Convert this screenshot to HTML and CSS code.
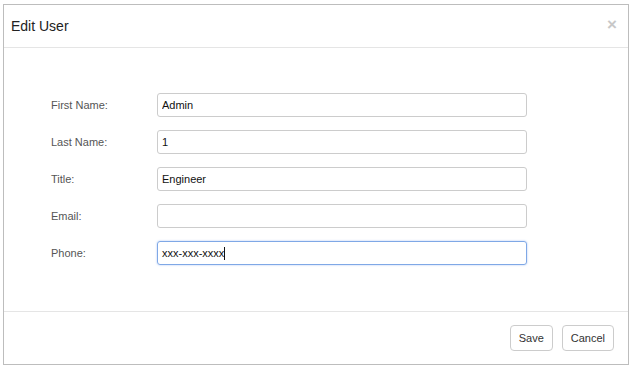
FILE: index.html
```html
<!DOCTYPE html>
<html lang="en">
<head>
    <meta charset="UTF-8">
    <title>Edit User</title>
    <link rel="stylesheet" href="styles.css">
</head>
<body>

<div class="modal">
    <div class="modal-header">
        <h4>Edit User</h4>
        <span class="close">&times;</span>
    </div>
    <div class="modal-body">
        <div class="form-row">
            <label>First Name:</label>
            <input type="text" value="Admin">
        </div>
        <div class="form-row">
            <label>Last Name:</label>
            <input type="text" value="1">
        </div>
        <div class="form-row">
            <label>Title:</label>
            <input type="text" value="Engineer">
        </div>
        <div class="form-row">
            <label>Email:</label>
            <input type="text" value="">
        </div>
        <div class="form-row">
            <label>Phone:</label>
            <div class="field focus">xxx-xxx-xxxx<span class="caret"></span></div>
        </div>
    </div>
    <div class="modal-footer">
        <button>Save</button>
        <button>Cancel</button>
    </div>
</div>

</body>
</html>
```

FILE: styles.css
```css
body {
    margin: 0;
    font-family: "Liberation Sans", Arial, sans-serif;
    font-size: 11px;
    color: #333;
    background: #fff;
}
.modal {
    margin: 4px 4px 0 3px;
    height: 359px;
    border: 1px solid #bdbdbd;
    display: flex;
    flex-direction: column;
}
.modal-header {
    height: 42px;
    border-bottom: 1px solid #e5e5e5;
    display: flex;
    align-items: center;
    justify-content: space-between;
    padding: 0 11px 0 7px;
}
.modal-header h4 {
    margin: 0;
    font-size: 14px;
    font-weight: normal;
    color: #222;
}
.close {
    font-size: 17px;
    font-weight: bold;
    color: #c8c8c8;
    margin-top: -2px;
}
.modal-body {
    flex: 1;
    padding: 45px 0 0 47px;
    display: flex;
    flex-direction: column;
    gap: 13px;
}
.form-row {
    display: flex;
    align-items: center;
}
.form-row label {
    width: 106px;
    color: #555;
}
.form-row input,
.field {
    box-sizing: border-box;
    width: 370px;
    height: 24px;
    padding: 0 4px;
    border: 1px solid #ccc;
    border-radius: 3px;
    font-family: inherit;
    font-size: 11px;
    color: #111;
    outline: none;
}
.field {
    display: flex;
    align-items: center;
}
.field.focus {
    border-color: #7fa8e6;
    box-shadow: 0 0 2px rgba(102, 150, 233, 0.6);
}
.caret {
    display: inline-block;
    width: 1px;
    height: 13px;
    background: #111;
}
.modal-footer {
    height: 52px;
    border-top: 1px solid #e5e5e5;
    display: flex;
    align-items: center;
    justify-content: flex-end;
    gap: 9px;
    padding-right: 14px;
}
.modal-footer button {
    height: 26px;
    padding: 0 8px;
    background: #fff;
    border: 1px solid #ccc;
    border-radius: 4px;
    font-family: inherit;
    font-size: 11px;
    color: #333;
}
```
